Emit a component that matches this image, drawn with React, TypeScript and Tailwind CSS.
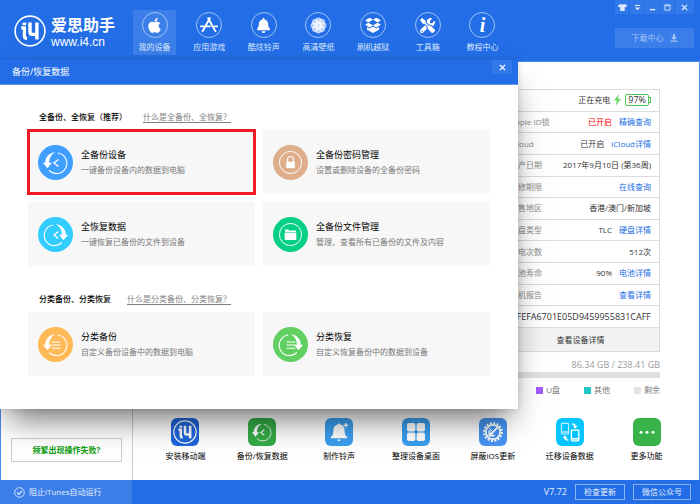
import type { ReactNode } from 'react';
import { FaApple, FaBell, FaTools, FaTshirt } from 'react-icons/fa';

interface NavItem {
  label: string;
  icon: ReactNode;
}

interface ActionCardProps {
  title: string;
  description: string;
  color: string;
  icon: ReactNode;
  highlighted?: boolean;
}

interface DeviceRow {
  label: string;
  value?: ReactNode;
  link?: string;
}

function LogoMark({ className }: { className: string }) {
  return (
    <svg className={className} viewBox="0 0 32 32" fill="none" stroke="currentColor" aria-hidden="true">
      <circle cx="16" cy="16" r="14.9" strokeWidth="1.6" />
      <rect x="8.6" y="7.6" width="3.6" height="2.6" fill="currentColor" stroke="none" />
      <path d="M7.2 12.9h3.2V21q0 2.4 2.6 2.4" strokeWidth="3.2" />
      <path d="M16 7.6v9.2q0 2.6 2.4 2.6h4.8M22.9 7.6v16.8" strokeWidth="3.4" />
    </svg>
  );
}

function AppsIcon() {
  return (
    <svg className="w-[20px] h-[20px]" viewBox="0 0 20 20" fill="none" stroke="currentColor" aria-hidden="true">
      <path d="M10.8 3.2 4 15.6M9.2 3.2 16 15.6" strokeWidth="1.9" strokeLinecap="round" />
      <path d="M1.2 11.4h10.6M15 11.4h3.8" strokeWidth="1.9" />
      <path d="m3.2 17 .4-1.6M16.8 17l-.4-1.6" strokeWidth="1.4" />
    </svg>
  );
}

function FlowerIcon() {
  return (
    <svg className="w-[19px] h-[19px]" viewBox="0 0 20 20" fill="currentColor" aria-hidden="true">
      {[0, 45, 90, 135, 180, 225, 270, 315].map((angle) => (
        <circle key={angle} cx="10" cy="4.8" r="3.2" opacity="0.68" transform={`rotate(${angle} 10 10)`} />
      ))}
      <circle cx="10" cy="10" r="3.6" opacity="0.85" />
    </svg>
  );
}

function BoxIcon() {
  return (
    <svg className="w-[18px] h-[18px]" viewBox="0 0 20 20" fill="currentColor" aria-hidden="true">
      <path d="M6.4 2 10 4.2 4.8 7.2 1.2 4.8zM13.6 2 10 4.2l5.2 3 3.6-2.4z" />
      <path d="m4.8 7.4 5.2 3-3.5 2.4-5.3-3zM15.2 7.4l-5.2 3 3.5 2.4 5.3-3z" />
      <path d="M3.4 12.2 6.5 14l3.5-2.4 3.5 2.4 3.1-1.8v3L10 19l-6.6-3.8z" />
    </svg>
  );
}

// Circular arrow shared by the backup (left) and restore (right) actions
function CycleIcon({ reversed, inner }: { reversed?: boolean; inner: 'chevron' | 'list' }) {
  return (
    <svg className="w-full h-full" viewBox="0 0 36 36" fill="none" stroke="currentColor" aria-hidden="true">
      <g transform={reversed ? 'matrix(-1 0 0 1 36 0)' : undefined}>
        <path
          d="M18 7.4C11.6 7.8 7.6 12 7.4 18.2H5L9.8 24l4.5-5.8h-2.8C11.4 13.6 13.6 9.4 18 7.4z"
          fill="currentColor"
          stroke="none"
        />
        <path d="M20.4 8.3A10.6 10.6 0 1 1 11.4 26.2" strokeWidth="1.1" />
      </g>
      {inner === 'chevron' ? (
        <path d="m21 15-4.6 3.6 4.6 3.6" strokeWidth="1.4" />
      ) : (
        <path d="M14 15.4h9M14 18.6h9M14 21.8h9" strokeWidth="1.1" />
      )}
    </svg>
  );
}

function LockIcon() {
  return (
    <svg className="w-full h-full" viewBox="0 0 36 36" fill="none" stroke="currentColor" aria-hidden="true">
      <circle cx="18" cy="18" r="11.4" />
      <path d="M15 17.4v-2.6a3 3 0 0 1 6 0v2.6" strokeWidth="1.2" />
      <rect x="13.6" y="17.2" width="8.8" height="6.6" fill="currentColor" stroke="none" />
    </svg>
  );
}

function FolderIcon() {
  return (
    <svg className="w-full h-full" viewBox="0 0 36 36" fill="none" stroke="currentColor" aria-hidden="true">
      <circle cx="18" cy="18" r="11.4" />
      <path d="M12.4 15.4v-2.6h3.4l1 1.2h6.8v1.4z" fill="currentColor" stroke="none" />
      <rect x="12" y="16" width="12" height="7.6" fill="currentColor" stroke="none" />
    </svg>
  );
}

function RingtoneIcon() {
  return (
    <svg className="w-full h-full" viewBox="0 0 28 28" fill="currentColor" aria-hidden="true">
      <path d="M14 5.4c.8 0 1.3.5 1.3 1.2 2.8.6 4.3 2.9 4.3 5.8 0 3.6.8 5.2 2.6 6.6v1.2H5.8V19c1.8-1.4 2.6-3 2.6-6.6 0-2.9 1.5-5.2 4.3-5.8 0-.7.5-1.2 1.3-1.2z" />
      <path d="M12.4 21.6h3.2a1.6 1.6 0 0 1-3.2 0z" />
      <path d="M20.8 5v4.4M18.6 7.2H23" stroke="currentColor" strokeWidth="1.4" />
    </svg>
  );
}

function DesktopIcon() {
  return (
    <svg className="w-full h-full" viewBox="0 0 28 28" fill="currentColor" aria-hidden="true">
      <rect x="5" y="5" width="8.4" height="8.4" rx="1.8" />
      <rect x="14.6" y="5" width="8.4" height="8.4" rx="1.8" />
      <rect x="5" y="14.6" width="8.4" height="8.4" rx="1.8" />
      <rect x="14.6" y="14.6" width="8.4" height="8.4" rx="1.8" />
    </svg>
  );
}

function BlockUpdateIcon() {
  return (
    <svg className="w-full h-full" viewBox="0 0 28 28" fill="none" stroke="currentColor" aria-hidden="true">
      <circle cx="14" cy="14" r="7.2" strokeWidth="1.8" />
      <circle cx="14" cy="14" r="9" strokeWidth="1.8" strokeDasharray="2 1.534" />
      <path d="M18.6 9.4 11 17M10.4 12.4v5.2h5.2" strokeWidth="1.8" />
      <path d="m9.6 9.6 4.4 4.4" strokeWidth="1" />
    </svg>
  );
}

function MigrateIcon() {
  return (
    <svg className="w-full h-full" viewBox="0 0 28 28" fill="none" stroke="currentColor" aria-hidden="true">
      <g opacity="0.75">
        <rect x="5.4" y="5.4" width="7.2" height="10.6" rx="0.8" strokeWidth="1.1" />
        <path d="M5.4 14h7.2" strokeWidth="1.4" />
      </g>
      <rect x="15.4" y="12.2" width="7.4" height="10.6" rx="0.8" strokeWidth="1.3" />
      <path d="M15.4 20.8h7.4" strokeWidth="1.6" />
      <path d="M15.8 5.8q3.4 0 3.4 2.6M12.4 22.2q-3.4 0-3.4-2.6" strokeWidth="1.3" />
      <path d="M16.8 7.8h4.8l-2.4 3zM6.6 20.2h4.8L9 17.2z" fill="currentColor" stroke="none" />
    </svg>
  );
}

function MoreIcon() {
  return (
    <svg className="w-full h-full" viewBox="0 0 28 28" fill="currentColor" aria-hidden="true">
      <circle cx="8" cy="14.2" r="1.5" />
      <circle cx="14" cy="14.2" r="1.5" />
      <circle cx="20" cy="14.2" r="1.5" />
    </svg>
  );
}

function CloseIcon() {
  return (
    <svg className="w-[7px] h-[7px]" viewBox="0 0 8 8" fill="none" stroke="currentColor" strokeWidth="1.6" aria-hidden="true">
      <path d="m1 1 6 6M7 1 1 7" />
    </svg>
  );
}

const navItems: NavItem[] = [
  { label: '我的设备', icon: <FaApple className="w-[17px] h-[17px]" /> },
  { label: '应用游戏', icon: <AppsIcon /> },
  { label: '酷炫铃声', icon: <FaBell className="w-[15px] h-[15px]" /> },
  { label: '高清壁纸', icon: <FlowerIcon /> },
  { label: '刷机越狱', icon: <BoxIcon /> },
  { label: '工具箱', icon: <FaTools className="w-[15px] h-[15px]" /> },
  {
    label: '教程中心',
    icon: <span className="font-['Liberation_Serif',serif] text-[20px] leading-none font-bold italic">i</span>
  }
];

const deviceRows: DeviceRow[] = [
  { label: 'Apple ID锁', value: <span className="text-[#ff0000]">已开启</span>, link: '精确查询' },
  { label: 'iCloud', value: '已开启', link: 'iCloud详情' },
  { label: '生产日期', value: '2017年9月10日 (第36周)' },
  { label: '保修期限', link: '在线查询' },
  { label: '销售地区', value: '香港/澳门/新加坡' },
  { label: '硬盘类型', value: 'TLC', link: '硬盘详情' },
  { label: '充电次数', value: '512次' },
  { label: '电池寿命', value: '90%', link: '电池详情' },
  { label: '验机报告', link: '查看详情' }
];

const legend = [
  { label: 'U盘', color: 'bg-[#a45cff]' },
  { label: '其他', color: 'bg-[#22c7c7]' },
  { label: '剩余', color: 'bg-[#e4e4e4]' }
];

const tools = [
  { label: '安装移动端', color: 'bg-[#1f66dc]', icon: <LogoMark className="w-[24px] h-[24px] m-[2px]" /> },
  { label: '备份/恢复数据', color: 'bg-[#35ac47]', icon: <CycleIcon inner="chevron" /> },
  { label: '制作铃声', color: 'bg-[#3a9ff0]', icon: <RingtoneIcon /> },
  { label: '整理设备桌面', color: 'bg-[#3a9ff0]', icon: <DesktopIcon /> },
  { label: '屏蔽iOS更新', color: 'bg-[#4694f2]', icon: <BlockUpdateIcon /> },
  { label: '迁移设备数据', color: 'bg-[#06c4ff]', icon: <MigrateIcon /> },
  { label: '更多功能', color: 'bg-[#37b34a]', icon: <MoreIcon /> }
];

function ActionCard({ title, description, color, icon, highlighted }: ActionCardProps) {
  return (
    <button
      type="button"
      className={`flex items-center gap-2 h-16 px-[10px] text-left bg-[#f7f7f7] ${
        highlighted ? 'outline-3 -outline-offset-2 outline-[#ed1c24]' : ''
      }`}
    >
      <span className={`w-[35px] h-[35px] shrink-0 rounded-full text-white ${color}`}>{icon}</span>
      <span className="flex flex-col">
        <span className="text-[9px] leading-[15px] text-black">{title}</span>
        <span className="text-[8px] leading-[15px] text-[#777]">{description}</span>
      </span>
    </button>
  );
}

function SectionHeading({ title, link }: { title: string; link: string }) {
  return (
    <div className="flex items-center gap-4 h-[14px] mb-[6px] pl-[11px]">
      <h3 className="font-medium text-black">{title}</h3>
      <a href="#help" className="text-[#808080] underline underline-offset-2">
        {link}
      </a>
    </div>
  );
}

function BackupDialog() {
  return (
    <div
      role="dialog"
      aria-label="备份/恢复数据"
      className="absolute left-0 top-[60px] w-[518px] bg-white shadow-[0_0_6px_rgba(0,0,0,0.12),0_18px_30px_-8px_rgba(0,0,0,0.55)]"
    >
      <div className="flex items-start justify-between h-[25px] pl-3 pr-[6px] bg-[#236ee6] border-b border-[#5f97ee] text-white">
        <h2 className="text-[9px] leading-[24px]">备份/恢复数据</h2>
        <button type="button" aria-label="关闭" className="flex items-center justify-center w-5 h-[14px] bg-[#3178e8]">
          <CloseIcon />
        </button>
      </div>
      <div className="px-7 pt-[25px] pb-[33px]">
        <SectionHeading title="全备份、全恢复（推荐）" link="什么是全备份、全恢复？" />
        <div className="grid grid-cols-2 gap-2 mb-[26px]">
          <ActionCard
            title="全备份设备"
            description="一键备份设备内的数据到电脑"
            color="bg-[#409eff]"
            icon={<CycleIcon inner="chevron" />}
            highlighted
          />
          <ActionCard title="全备份密码管理" description="设置或删除设备的全备份密码" color="bg-[#deae8a]" icon={<LockIcon />} />
          <ActionCard
            title="全恢复数据"
            description="一键恢复已备份的文件到设备"
            color="bg-[#33ccff]"
            icon={<CycleIcon inner="chevron" reversed />}
          />
          <ActionCard title="全备份文件管理" description="管理、查看所有已备份的文件及内容" color="bg-[#06cf86]" icon={<FolderIcon />} />
        </div>
        <SectionHeading title="分类备份、分类恢复" link="什么是分类备份、分类恢复？" />
        <div className="grid grid-cols-2 gap-2">
          <ActionCard
            title="分类备份"
            description="自定义备份设备中的数据到电脑"
            color="bg-[#ffb957]"
            icon={<CycleIcon inner="list" />}
          />
          <ActionCard
            title="分类恢复"
            description="自定义恢复备份中的数据到设备"
            color="bg-[#61cf61]"
            icon={<CycleIcon inner="list" reversed />}
          />
        </div>
      </div>
    </div>
  );
}

function Header() {
  return (
    <header className="flex items-start justify-between h-[61px] pr-[6px] bg-[#236ee6] text-white">
      <div className="flex">
        <div className="flex items-center gap-[5px] w-[133px] h-[61px] pl-[14px]">
          <LogoMark className="w-8 h-8 shrink-0" />
          <div className="pt-[2px] whitespace-nowrap">
            <div className="text-[16px] leading-[20px] font-bold">爱思助手</div>
            <div className="font-['Liberation_Sans',sans-serif] text-[12px] leading-[14px]">www.i4.cn</div>
          </div>
        </div>
        <nav className="flex justify-between w-[371px] pt-[10px]">
          {navItems.map((item, index) => (
            <a
              key={item.label}
              href="#nav"
              className={`flex flex-col items-center w-[43px] h-[45px] pt-[2px] ${index === 0 ? 'bg-[#3d7fe9]' : ''}`}
            >
              <span className="flex items-center justify-center w-[26px] h-[26px] rounded-full border border-[#9fc1f6]">
                {item.icon}
              </span>
              <span className="mt-[2px] leading-[14px] text-[#dbe8fc]">{item.label}</span>
            </a>
          ))}
        </nav>
      </div>
      <div className="w-[79px]">
        <div className="grid grid-cols-[14px_14px_14px_14px_19px] gap-px h-[14px] text-[#dfeafc]">
          <button type="button" aria-label="皮肤" className="flex items-center justify-center bg-[#3178e8]">
            <FaTshirt className="w-[9px] h-[9px]" />
          </button>
          <button type="button" aria-label="菜单" className="flex items-center justify-center bg-[#3178e8]">
            <svg className="w-[7px] h-[7px]" viewBox="0 0 8 8" fill="currentColor" aria-hidden="true">
              <path d="M1 1h6v1.4H1zM1 4h6L4 7z" />
            </svg>
          </button>
          <button type="button" aria-label="最小化" className="flex items-center justify-center bg-[#3178e8]">
            <svg className="w-[7px] h-[7px]" viewBox="0 0 8 8" fill="currentColor" aria-hidden="true">
              <path d="M1 5.6h6v1.6H1z" />
            </svg>
          </button>
          <button type="button" aria-label="最大化" className="flex items-center justify-center bg-[#3178e8]">
            <svg className="w-[7px] h-[7px]" viewBox="0 0 8 8" fill="none" stroke="currentColor" aria-hidden="true">
              <path d="M1 1h6v6H1zM1 2h6" />
            </svg>
          </button>
          <button type="button" aria-label="关闭窗口" className="flex items-center justify-center bg-[#3178e8]">
            <CloseIcon />
          </button>
        </div>
        <button
          type="button"
          className="flex items-center justify-center gap-[6px] w-full h-5 mt-[14px] bg-[#3b7de9] text-[#a9c7f6]"
        >
          下载中心
          <svg className="w-2 h-2" viewBox="0 0 8 8" fill="currentColor" aria-hidden="true">
            <path d="M3 0h2v3h2L4 6 1 3h2zM.6 6.6h6.8v1.2H.6z" />
          </svg>
        </button>
      </div>
    </header>
  );
}

function DeviceInfo() {
  return (
    <div className="w-[159px] ml-auto mr-[39px] pt-[27px]">
      <table className="w-full h-[239px] border-collapse border border-[#dcdcdc] whitespace-nowrap text-[#333]">
        <tbody>
          <tr className="border-b border-[#dcdcdc]">
            <td colSpan={2} className="pr-2">
              <div className="flex items-center justify-end gap-1">
                正在充电
                <svg className="w-[7px] h-3" viewBox="0 0 7 12" fill="#6bd968" aria-hidden="true">
                  <path d="M5 0 0 6.6h2.8L1.6 12 7 4.8H4z" />
                </svg>
                <span className="flex items-center">
                  <span className="h-3 px-[2px] rounded-xs border border-[#4cc254] text-[9px] leading-[10px]">97%</span>
                  <span className="w-[2px] h-[6px] border border-l-0 border-[#4cc254]" />
                </span>
              </div>
            </td>
          </tr>
          {deviceRows.map((row) => (
            <tr key={row.label} className="border-b border-[#dcdcdc]">
              <th scope="row" className="pl-2 text-left font-normal text-[#8c8c8c]">
                {row.label}
              </th>
              <td className="pr-2 text-right">
                {row.value}
                {row.link && (
                  <a href="#detail" className="ml-[7px] text-[#236ee6]">
                    {row.link}
                  </a>
                )}
              </td>
            </tr>
          ))}
          <tr>
            <td colSpan={2} className="pr-2 text-right text-[9px]">
              08FEFA6701E05D9459955831CAFF
            </td>
          </tr>
        </tbody>
      </table>
      <button type="button" className="w-full h-6 bg-[#f2f2f2] border border-t-0 border-[#dcdcdc] text-[#333]">
        查看设备详情
      </button>
      <div className="mt-[6px] text-right text-[9px] leading-[14px] text-[#999]">86.34 GB / 238.41 GB</div>
      <div className="h-[6px] bg-[#e0e0e0]" />
      <ul className="flex justify-end gap-6 mt-[5px] leading-[14px] text-[#777]">
        {legend.map((item) => (
          <li key={item.label} className="flex items-center gap-[3px]">
            <span className={`w-[7px] h-[7px] ${item.color}`} />
            {item.label}
          </li>
        ))}
      </ul>
    </div>
  );
}

export default function App() {
  return (
    <div className="relative flex flex-col min-h-screen bg-white font-['Open_Sans','Noto_Sans_CJK_SC',sans-serif] text-[8px] leading-[12px]">
      <Header />
      <main className="flex flex-1 border-x border-t border-[#4c89ea]">
        <aside className="flex flex-col justify-end w-[132px] px-[10px] pb-[18px] border-r border-[#ccc]">
          <button type="button" className="h-6 border border-[#ccc] bg-white font-bold text-[#0a9c0a]">
            频繁出现操作失败?
          </button>
        </aside>
        <section className="flex flex-col flex-1 min-w-0">
          <DeviceInfo />
          <div className="grid grid-cols-7 mt-auto px-[14px] pb-[17px]">
            {tools.map((tool) => (
              <button key={tool.label} type="button" className="flex flex-col items-center gap-[3px] text-black">
                <span className={`w-7 h-7 rounded-md text-white ${tool.color}`}>{tool.icon}</span>
                <span className="leading-[14px] whitespace-nowrap">{tool.label}</span>
              </button>
            ))}
          </div>
        </section>
      </main>
      <footer className="flex items-center justify-between h-6 pr-[9px] bg-[#236ee6] text-[#e6effd]">
        <button type="button" className="flex items-center gap-1 w-[132px] h-full pl-[14px] bg-[#3d7fe9]">
          <svg className="w-[11px] h-[11px]" viewBox="0 0 12 12" fill="none" stroke="currentColor" aria-hidden="true">
            <circle cx="6" cy="6" r="5.2" />
            <path d="m3.4 6 2 2 3.4-3.8" strokeWidth="1.4" />
          </svg>
          阻止iTunes自动运行
        </button>
        <div className="flex items-center gap-2">
          <span className="text-[9px]">V7.72</span>
          <button type="button" className="h-4 px-2 border border-[#8bb3f3] leading-[14px]">
            检查更新
          </button>
          <button type="button" className="h-4 px-2 border border-[#8bb3f3] leading-[14px]">
            微信公众号
          </button>
        </div>
      </footer>
      <BackupDialog />
    </div>
  );
}
